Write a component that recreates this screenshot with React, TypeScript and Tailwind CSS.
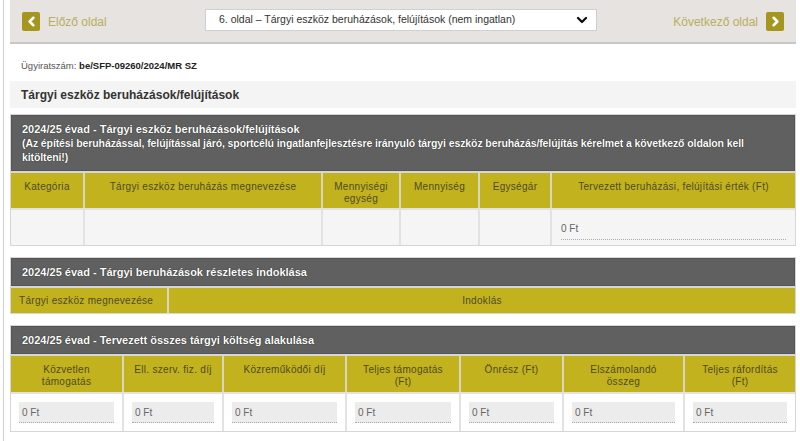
import { ChevronLeft, ChevronRight, ChevronDown } from 'lucide-react'

const font = { fontFamily: '"Liberation Sans", Arial, sans-serif' }

interface Col {
  label: string
  w: string
  pad?: string
}

const assetCols: Col[] = [
  { label: 'Kategória', w: 'w-[74px]' },
  { label: 'Tárgyi eszköz beruházás megnevezése', w: 'w-[238px]' },
  { label: 'Mennyiségi egység', w: 'w-[78px]' },
  { label: 'Mennyiség', w: 'w-[79px]' },
  { label: 'Egységár', w: 'w-[72px]' },
  { label: 'Tervezett beruházási, felújítási érték (Ft)', w: 'flex-1' },
]

const costCols: Col[] = [
  { label: 'Közvetlen támogatás', w: 'w-[113px]' },
  { label: 'Ell. szerv. fiz. díj', w: 'w-[100px]' },
  { label: 'Közreműködői díj', w: 'w-[123px]' },
  { label: 'Teljes támogatás (Ft)', w: 'w-[114px]' },
  { label: 'Önrész (Ft)', w: 'w-[103px]' },
  { label: 'Elszámolandó összeg', w: 'w-[121px]', pad: 'px-[16px]' },
  { label: 'Teljes ráfordítás (Ft)', w: 'flex-1' },
]

function DarkBar({ children, tall }: { children: React.ReactNode; tall?: boolean }) {
  return (
    <div
      className={`bg-[#606060] border border-[#555] px-[10px] text-white font-bold text-[11px] leading-[14px] [text-shadow:0_0_1px_#000] ${
        tall ? 'pt-[6px] pb-[6px] h-[56px]' : 'h-[28px] flex items-center'
      }`}
    >
      {children}
    </div>
  )
}

function YellowCell({ label, w, pad, last }: { label: string; w: string; pad?: string; last?: boolean }) {
  return (
    <div
      className={`${w} ${pad ?? 'px-2'} bg-[#c2b21e] flex items-start justify-center pt-[8px] text-center text-[10px] leading-[12px] tracking-[0.3px] text-[#4f4a26] ${
        last ? '' : 'border-r-2 border-[#d9d6c4]'
      }`}
    >
      {label}
    </div>
  )
}

function MoneyBox() {
  return (
    <div className="bg-[#ececec] h-[21px] border-b border-dotted border-[#a8a8a8] flex items-center px-[3px] text-[10px] text-[#666]">
      0 Ft
    </div>
  )
}

export default function App() {
  return (
    <div className="w-[800px] h-[441px] overflow-hidden bg-white" style={font}>
      <div className="ml-[3px] border-l border-[#cfcfcf] h-full pl-[6px] w-[793px]">
        {/* page navigation */}
        <div className="h-[44px] bg-[#e6e3e1] border-b-2 border-[#c9c7c5] flex items-center px-[12px]">
          <div className="flex items-center gap-[8px] w-[183px] pt-[1px]">
            <span className="w-[18px] h-[19px] rounded-[2px] bg-[#a5961f] flex items-center justify-center">
              <ChevronLeft size={15} strokeWidth={4} color="#fff" />
            </span>
            <span className="text-[12px] text-[#b9ae5c]">Előző oldal</span>
          </div>
          <div className="w-[392px] h-[22px] bg-white border border-[#d0d0d0] flex items-center pl-[13px] pr-[6px] mb-[2px]">
            <span className="text-[10.5px] text-[#333] flex-1">
              6. oldal – Tárgyi eszköz beruházások, felújítások (nem ingatlan)
            </span>
            <ChevronDown size={16} strokeWidth={3.5} color="#111" />
          </div>
          <div className="flex-1 flex items-center justify-end gap-[8px] pt-[1px]">
            <span className="text-[12px] text-[#b9ae5c]">Következő oldal</span>
            <span className="w-[18px] h-[19px] rounded-[2px] bg-[#a5961f] flex items-center justify-center">
              <ChevronRight size={15} strokeWidth={4} color="#fff" />
            </span>
          </div>
        </div>

        <div className="pl-[11px] pt-[15px] h-[37px] text-[9.5px]">
          <span className="text-[#555]">Ügyiratszám: </span>
          <span className="font-bold text-[#222]">be/SFP-09260/2024/MR SZ</span>
        </div>

        <div className="h-[27px] bg-[#f4f4f4] flex items-center px-[11px] text-[12px] font-bold text-[#333]">
          Tárgyi eszköz beruházások/felújítások
        </div>

        {/* table 1 */}
        <div className="mt-[6px] border border-[#d6d6d6]">
          <DarkBar tall>
            2024/25 évad - Tárgyi eszköz beruházások/felújítások
            <br />
            <span className="text-[10.5px] tracking-[-0.1px]">
              (Az építési beruházással, felújítással járó, sportcélú ingatlanfejlesztésre irányuló tárgyi eszköz
              beruházás/felújítás kérelmet a következő oldalon kell kitölteni!)
            </span>
          </DarkBar>
          <div className="flex h-[37px] border-t-2 border-[#d6d6d6]">
            {assetCols.map((c, i) => (
              <YellowCell key={c.label} label={c.label} w={c.w} pad={c.pad} last={i === assetCols.length - 1} />
            ))}
          </div>
          <div className="flex h-[37px] border-t-2 border-[#e2e2e2] bg-[#f5f5f5]">
            {assetCols.map((c, i) =>
              i === assetCols.length - 1 ? (
                <div key={c.label} className={`${c.w} px-[9px] pt-[11px]`}>
                  <div className="border-b border-dotted border-[#aaa] pb-[3px] text-[10px] text-[#666]">0 Ft</div>
                </div>
              ) : (
                <div key={c.label} className={`${c.w} border-r-2 border-[#e2e2e2]`} />
              )
            )}
          </div>
        </div>

        {/* table 2 */}
        <div className="mt-[11px] border border-[#d6d6d6]">
          <DarkBar>2024/25 évad - Tárgyi beruházások részletes indoklása</DarkBar>
          <div className="flex h-[27px] border-t-2 border-[#d6d6d6] text-[10px] tracking-[0.3px] text-[#4f4a26]">
            <div className="w-[158px] bg-[#c2b21e] flex items-center px-[8px] border-r-2 border-[#d9d6c4]">
              Tárgyi eszköz megnevezése
            </div>
            <div className="flex-1 bg-[#c2b21e] flex items-center justify-center">Indoklás</div>
          </div>
        </div>

        {/* table 3 */}
        <div className="mt-[11px] border border-[#d6d6d6]">
          <DarkBar>2024/25 évad - Tervezett összes tárgyi költség alakulása</DarkBar>
          <div className="flex h-[38px] border-t-2 border-[#d6d6d6]">
            {costCols.map((c, i) => (
              <YellowCell key={c.label} label={c.label} w={c.w} pad={c.pad} last={i === costCols.length - 1} />
            ))}
          </div>
          <div className="flex h-[39px] border-t-2 border-[#e2e2e2] bg-white">
            {costCols.map((c, i) => (
              <div
                key={c.label}
                className={`${c.w} px-[8px] pt-[8px] ${i === costCols.length - 1 ? '' : 'border-r-2 border-[#e2e2e2]'}`}
              >
                <MoneyBox />
              </div>
            ))}
          </div>
        </div>
      </div>
    </div>
  )
}
